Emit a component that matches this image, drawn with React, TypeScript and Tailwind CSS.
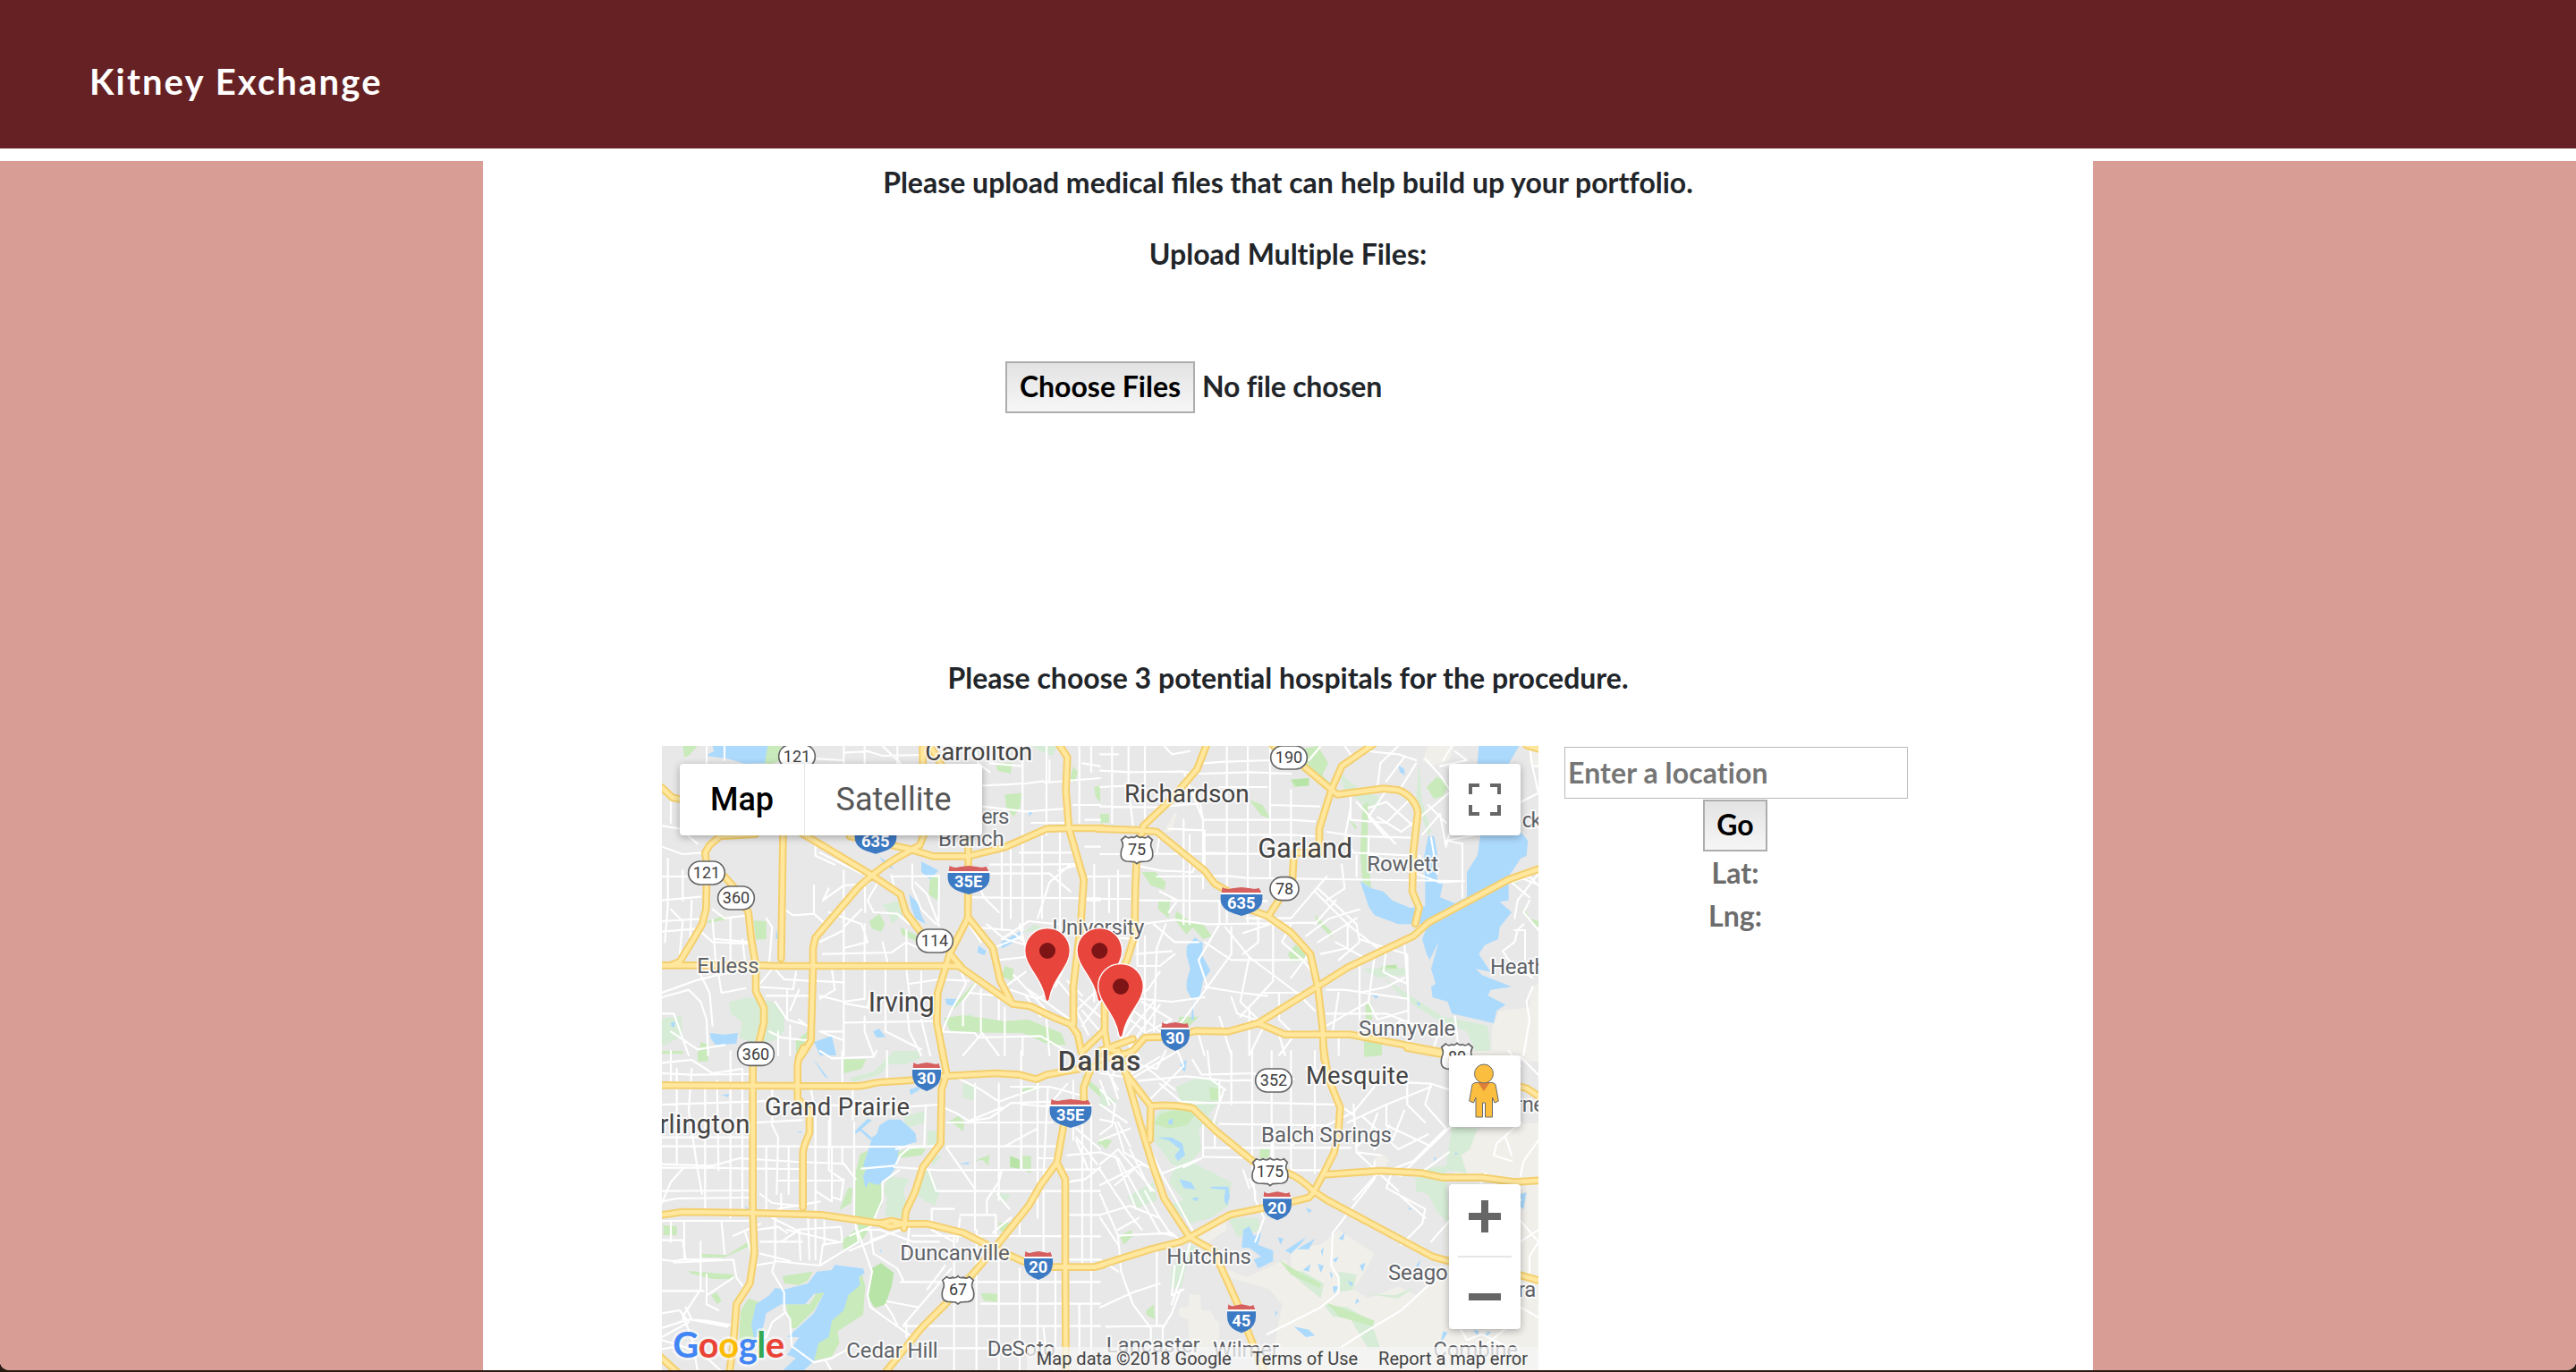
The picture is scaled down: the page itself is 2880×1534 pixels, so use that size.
import React from "react";

type Label = [text: string, x: number, y: number, width: number, size: number, tone?: "city" | "town" | "core"];
type Shield = [kind: "interstate" | "state" | "us", text: string, x: number, y: number];

interface Tile {
  at: string;
  land: string;
  haze: string;
  park: string;
  wood: string;
  water: string;
  streets: string;
  roads: string;
  labels: Label[];
  shields: Shield[];
}

/* The map is drawn as four tiles, each with its own origin. */
const tiles: Tile[] = [
  {
    at: "translate(-30 -42)",
    land: "",
    haze:
      "M1270 42L1355 42 1340 75 1300 60ZM770 575L830 560 835 610 800 640 790 600ZM255 900L330 885 400 900 440 940 440 1000 410 1030 340 1040 290 1020 300 970 260 940ZM30 955L95 948 100 1015 30 1050ZM1020 950L1080 940 1020 990ZM1280 640L1310 655 1240 670Z",
    park:
      "M100 42L150 42 120 75 105 80ZM365 42L430 42 430 90 400 102 360 100ZM1150 100L1205 98 1200 135 1155 125ZM1180 205L1235 200 1232 245 1210 280 1185 250ZM1410 110L1425 130 1415 165 1400 150ZM1480 180L1500 175 1500 230 1485 215ZM930 478L962 478 955 560 925 540ZM725 630L760 605 778 640 765 665 735 655ZM180 630L240 612 245 625 185 636ZM338 628L380 630 380 690 345 692ZM830 650L890 680 900 705 835 675ZM1180 780L1210 790 1205 830 1170 815ZM975 955L1040 945 1180 965 1260 960 1370 1005 1385 1045 1330 1045 1240 1005 1000 1003ZM1000 920L1085 830 1070 860 1010 925ZM480 1030L520 1000 505 1060 480 1080ZM160 1035L190 1045 180 1080 155 1080Z",
    wood: "",
    water:
      "M200 42L385 42 375 100 310 102 250 85 175 75 205 60ZM900 430L958 460 930 490 900 465ZM760 415L785 430 810 455 780 445ZM860 540L890 570 900 610 915 640 880 620 865 580ZM1168 700L1240 660 1210 700 1170 722ZM1092 712L1118 730 1112 745 1088 735ZM190 1005L240 1010 285 1005 280 1040 210 1045 195 1025ZM738 1000L758 990 780 1018 750 1020ZM540 1035L600 1015 615 1080 560 1080ZM414 655L420 690 412 690ZM980 890L1020 890 1015 915 985 910ZM60 970L75 968 72 985 62 984ZM1260 265L1275 262 1262 280Z",
    streets:
      "M180 42V100M240 42V90M640 42V102M710 42V102M770 42L830 100M820 42V102M550 85L640 90 640 65 720 60 770 75 900 72M1080 42L1090 100 1130 130M1240 42V560M1320 42V340M1315 165L1500 150M1105 175L1250 168 1310 160M1430 42V300M1470 42V130M1105 245L1250 262 1390 252M1130 100L1240 110M1410 240L1500 240M1170 350V660M1200 370V620M1240 400V660M1305 345V620M1365 330V700M1130 440L1240 440 1430 438M1060 470H1330L1400 530M1060 550L1500 553M1230 400H1420M1400 440L1330 500 1290 620M30 310L90 320 150 370M30 380L100 405 170 400M60 230V300M30 480H120M30 560L160 548M50 420V580L40 700M100 460V560M30 630L160 622M30 665L150 655 200 700 320 705M60 590L100 630 90 740M130 560L125 690M200 590L240 620 320 610M200 625L210 760M260 620V770M300 690L310 775M210 690L330 700M380 620L400 650 390 770M440 590L470 610 540 605 580 640M540 510V600M590 520L570 560 640 510 720 505 740 475M560 400L700 470M545 360V410L610 440M640 460V780M710 475L712 600M760 490L720 560 740 600 820 605 860 640M800 475L810 520M870 440L870 520 900 590 950 640M880 500L920 540 960 645M960 480L958 630M800 480L960 478M590 600L700 640 720 700 640 720M640 660L560 700M570 740L800 735 850 700 890 720M710 640V780M770 700L790 780M850 660L850 780M640 790V1080M710 790V890L640 900 560 880M600 790L610 860 560 890M780 790V1000M850 790L860 880M860 840L960 825 1060 830M900 800V920M540 830L640 835M640 970L950 965M560 1000L640 1030M640 905L720 920 730 870M1030 790L1050 840 1000 930 970 1000M1090 830L1040 900 1040 980M1100 860V1000L1160 1080M1160 890V960M1180 920V1080M960 1000L1080 1005 1090 1020 1300 1015 1410 1080M1060 870L1160 880M1140 720L1240 680M1060 640L1100 700M1120 640L1180 690 1290 720M1070 650L1200 660 1245 700M1230 640L1250 720M1160 760L1250 750M1180 850L1250 800M1210 810L1320 930M1350 820L1400 880 1410 940M1390 830L1440 880M1430 890L1500 950M1440 930L1500 1000M1250 880L1300 950M1200 860L1290 890 1330 870M1260 860L1400 960M1480 870L1420 930 1460 1010M1500 900L1440 980M1445 560L1500 560M1450 480H1500M1430 640H1500M1310 740V850M1380 780L1350 850M30 870L140 830 220 810 340 790M150 790L190 870 200 980M220 810L230 870 310 855M400 780L440 825 520 830M400 790L350 850 470 858 480 800M380 880H530M410 900L450 960 520 980M450 860V960M490 860L460 930M30 885L120 860 160 900 180 960 185 1080M30 940H70L120 1080M60 1000L150 1060 240 1045M390 1000L430 1020 520 1030M420 1000L420 1080M460 980V1080M490 960L540 1000M640 1000H560M710 950V1000L740 1080M850 900L860 1000 900 1080M900 960L930 1080M780 1000L900 1060M1100 1010L1040 1080M1240 1020V1080M1320 960L1330 1080M700 590L640 650M1440 100L1500 110M1450 290L1500 290M1330 90V160M1270 300H1380M1450 380H1500M1170 690L1260 630 1360 640M1360 460L1430 440M1480 440V900M1080 480L1110 550 1160 600",
    roads:
      "M30 182L65 215 100 222M345 338L225 345 190 375 175 400 180 440V500L178 590 165 640 130 700 90 765 60 778M240 480L275 520 320 600 330 690 345 780V865L372 920V970L355 1040 338 1085M437 300L430 755M10 778H370L410 780H1025L1110 840 1205 907 1265 915 1350 955 1400 975 1425 1010 1437 1070M500 335L600 395 733 475 830 540 848 600 905 675M912 330L895 375 860 395C800 425 733 475 690 515L600 620 545 685 537 720V780L530 1030 495 1085M660 345L860 388 940 412H1058L1180 382 1320 320 1400 318H1510M1055 345L1058 412 1056 620 995 740 980 790 955 870 952 970 975 1090M1060 620L1140 720 1165 830 1205 907M1350 20L1365 42 1390 80 1385 190 1395 318 1445 490 1435 640 1410 850V975M905 42V110M930 42L970 110M995 738L1035 785M1437 1070L1510 1000",
    labels: [
      ["Carrollton", 913, 90, 360, 84, "city"],
      ["ers", 1102, 303, 93, 72],
      ["Branch", 957, 377, 221, 72],
      ["Euless", 148, 805, 208, 72],
      ["Irving", 722, 932, 222, 92, "city"],
      ["University", 1340, 676, 308, 72],
    ],
    shields: [
      ["state", "121", 483, 77],
      ["interstate", "635", 747, 356],
      ["interstate", "35E", 1059, 492],
      ["state", "121", 180, 468],
      ["state", "360", 279, 552],
      ["state", "114", 945, 696],
    ],
  },
  {
    at: "translate(1470 -42)",
    land:
      "M1100 42L1190 42 1170 90 1110 110 1080 90ZM1440 55L1500 42 1500 110 1440 105ZM1340 930L1440 920 1445 850 1500 830 1500 1100 1310 1100 1315 985ZM215 330L250 265 258 270 240 330Z",
    haze:
      "M800 130L860 180 940 215 935 250 880 235 820 190ZM1070 100L1080 230 1110 330 1100 345 1060 210ZM880 790L1020 785 1025 810 930 820ZM950 820L1040 880 1150 950 1300 980 1310 1060 1260 1070 1230 1000 1130 960 1020 890ZM1380 480L1420 460 1390 520Z",
    park:
      "M640 60L730 42 765 100 745 140 775 170 760 190 700 130 650 100ZM0 210V270H30V300H0ZM500 222L545 240 570 285 540 275ZM640 155L700 150 700 175 650 180ZM1095 180L1130 145 1170 170 1150 210 1120 220ZM880 240L900 230 895 400 910 520 880 500 872 400ZM140 465L185 465 220 500 215 525 170 510ZM195 560L235 555 230 620 195 590ZM255 595L300 630 345 640 375 680 345 690 310 650 290 675 250 625ZM630 740L655 708 690 740 680 765 640 765ZM720 608L780 670 775 685 725 630ZM890 905H912V960H890ZM945 780L995 775 995 790 940 792ZM885 1010L945 1020V1080H885ZM265 950L330 950 300 980 260 985ZM835 290L860 310 858 325ZM1420 580L1440 620 1470 630 1470 650 1430 620Z",
    wood: "M640 155L700 150 700 175 660 178ZM945 780L995 778 990 788Z",
    water:
      "M1270 42L1405 42 1370 102 1265 102ZM1275 342L1410 330 1435 360 1430 410 1410 420 1370 480 1370 560 1340 565 1380 600 1340 650 1335 690 1290 710 1270 740 1310 800 1260 790 1280 810 1380 850 1310 860 1300 880 1360 910 1330 930 1320 972 1180 940 1165 900 1115 885 1110 850 1125 840 1110 790 1135 700 1105 760 1095 740 1080 690 1100 640 1000 640 920 610 900 580 872 495 910 520 950 530 980 560 1040 585 1090 580 1090 500 1085 420 1100 345 1120 345 1130 400 1130 490 1150 500 1140 550 1190 570 1230 550 1230 465 1265 410ZM290 715L318 685 345 705 342 745 370 795 345 830 335 880 310 895 290 860 290 830 302 790 290 745ZM1000 105L1020 120 1022 140 1005 130ZM910 875L935 880 925 890ZM310 900L315 960 305 960ZM1060 900L1075 905 1068 915Z",
    streets:
      "M0 125L100 130 280 128M0 180L100 175M40 42V300M95 42V180L110 310M150 42V290M215 42L240 70 300 60M0 245L180 248 330 235M330 200L345 290 640 290 720 295M270 128L340 135 500 130 640 135M425 42V640M350 340H640L720 345M345 100L420 95 570 90M495 42V640M570 42V480M640 190V400M350 400L540 405M0 405L270 404 550 404M0 480L100 478M190 480L430 478 490 485 1200 495M280 128L345 290 345 520M280 290V640M400 180H560M570 240L735 245M0 555H110M130 560L400 562M0 640L100 640M130 640L250 625 360 640 720 635M200 340L190 400M230 320L350 325 350 440M300 340V640M60 460V640M30 490V600M400 562V640L330 760 360 850M440 562L560 562M490 620L640 620 760 480M420 650L500 750 660 870M580 640V830L470 950M350 700L440 760 720 760M440 650V740L360 850 280 960M500 750L470 900 530 960M640 640L610 700 680 760 740 840M720 530L830 640 830 720 740 740M730 520L860 640 870 700 800 760M760 560L820 520 810 440M720 640L790 560M690 680L770 620 870 590M730 700L860 620M790 700L900 760M830 640L930 720M640 820L700 740M550 870H720M560 960L500 1080M350 850L470 870 560 880M350 885L240 900 130 890M440 885L460 940 520 960M600 870V960L640 1000M660 870L720 930M760 860L820 860 1030 890M800 870L780 1000M870 770V960M920 750L900 900 930 960 1030 930M960 720L950 800 1030 840M870 690L960 720 1030 740 1035 1000M1020 700L1035 900M870 870L960 850 1020 820M760 940H960L1110 1000M760 980L900 900M820 42L840 70M900 60L1000 70 1060 90M740 42L700 90M1000 42L940 100 930 180M1020 80L960 160M1090 85L1140 140 1180 200M1060 100L1010 180M840 190V290L960 300 1040 220M860 230L990 370M900 250L960 230 1050 310M960 190L900 280 960 350M930 280L1010 330 1050 300M760 330L860 345 1040 350M840 250L820 350 850 400 1050 410M900 345V400L1050 470M860 410V480M1060 470L1140 500 1220 495M1070 410L1100 470M1140 270L1080 340M1140 270L1160 380 1170 340M1110 350L1130 470M1215 550V370L1160 360 1260 340M1190 60L1230 90 1140 110M1180 42L1150 90M1050 300L1170 200M1100 240L1160 300M1440 42L1450 110 1470 200 1410 230M1450 110H1500M1500 540L1440 480 1380 500 1440 550M1400 480L1500 520M1420 640L1400 660 1390 700 1350 730 1370 760 1450 820M1390 660H1425V760M1390 620L1400 560 1470 470M1450 850L1430 900 1440 960 1420 1080M1440 560L1420 600 1470 660M150 680V1000M190 720L180 1000M220 640L190 720M0 680L110 690M125 690V780L200 780 250 740M120 740L240 730M120 790V860M200 800L160 860 90 900M140 900L240 960 160 1000M100 920L200 1000M90 950L170 1020M60 1010L130 1080M0 870V900M130 890L60 1050M180 900L60 1050M200 910L100 1050M280 960L240 1000M330 1010L350 1080M400 950L440 1080M500 920V1080M600 1010L620 1080M660 1000L600 1080M800 1020V1080M950 970L870 1000M1010 960L970 1000M1150 960L1120 1050M1190 950L1200 1040M480 670L570 640M530 600V700L480 740M0 70H60M200 530L260 560 230 600M180 640L250 700 330 700M110 440L200 460 310 465 320 440",
    roads:
      "M360 30L325 120 240 220 145 310 138 340M-10 320L140 325 190 330 350 460 385 505 430 530 500 590 560 612 640 668 705 740 730 850 745 980 752 1095M122 430L118 520 115 680 90 760 60 830M570 30L600 60M670 100L795 205 950 185 1000 190C1040 205 1065 240 1065 270L1050 400 1047 530 1070 585 1057 638M925 30L810 110 775 190 735 320V400H650L645 490M605 550L565 612M1490 448L1370 490 1100 635 1050 680 830 785 735 845 530 972 430 1000 320 998 240 1018 150 1020 110 1065 40 1090M530 972L620 1010H840L1160 1072M15 910V1000L25 1055 60 1070M1430 40L1480 55",
    labels: [
      ["Richardson", 81, 231, 419, 84, "city"],
      ["Garland", 529, 418, 317, 92, "city"],
      ["Rowlett", 895, 463, 239, 72],
      ["ck", 1415, 315, 66, 72],
      ["Heath", 1308, 808, 188, 72],
      ["Sunnyvale", 867, 1014, 325, 72],
    ],
    shields: [
      ["state", "190", 633, 81],
      ["us", "75", 123, 389],
      ["interstate", "635", 474, 564],
      ["state", "78", 618, 521],
      ["interstate", "30", 252, 1017],
      ["us", "80", 1197, 1085],
    ],
  },
  {
    at: "translate(-30 1023)",
    land: "",
    haze:
      "M810 0L890 0 895 25 850 45 790 45 760 80 670 105 660 90 740 70 780 30ZM1040 110L1080 110 1080 165 1040 160ZM840 220L915 200 910 240 850 260ZM790 420L860 430 840 470 850 510 830 560 780 555 785 490 770 470ZM905 400L930 400 960 480 945 520 890 490ZM1145 478L1200 480 1180 512ZM920 270L960 265 955 310 920 320ZM930 360L970 350 940 385Z",
    park:
      "M640 28L715 28 700 60 640 75ZM150 0H185V35H150ZM30 0H100V10H30ZM695 345L720 335 710 395 765 440 768 520 745 560 705 630 640 672 635 635 690 590 678 560 680 405ZM655 460L670 460 665 510 625 535ZM820 340L880 320 915 330 900 350 820 360ZM985 240L1025 218 1045 240 1040 270 1010 245ZM1070 372L1130 348 1125 385 1105 365ZM1198 352L1230 365 1230 395 1198 390ZM1240 352H1268V410L1240 400ZM1160 575L1200 578 1180 610 1160 600ZM1235 130L1285 115 1290 130 1235 140ZM1440 80L1500 130 1500 155 1440 100ZM35 585L80 588V618H35ZM160 680L250 685 320 640 325 655 240 692 165 692ZM115 738L200 745 270 750 275 765 200 765 130 748ZM195 820L215 810 230 840 215 848ZM435 755L535 740 520 770 490 785 440 780ZM320 830L365 845 335 900 345 940 290 935 295 870ZM700 745L712 790 705 885 620 940 625 980 600 1025 535 1040 560 960 595 890 650 820 680 790ZM445 850L525 850 550 810 575 810 540 870 480 930 465 930ZM290 935L350 940 330 975 290 970ZM1100 812L1155 815V842L1110 838ZM765 712L808 745 800 790 780 850 745 862 722 830 735 730ZM1490 310L1500 300V320Z",
    wood: "M765 712L808 745 800 790 780 850 745 862 722 830 735 730ZM1198 352L1230 365 1230 395 1198 390Z",
    water:
      "M760 250L790 230H830L880 275 885 305 850 315 825 330 815 390 790 425 755 450 725 440 712 460 705 420 715 395 705 385 725 325 735 290 750 280ZM676 270L720 228 735 232 700 262 735 292 730 300 695 268 680 278ZM610 718L705 730 710 745 690 760 695 785 655 820 640 870 600 905 590 960 555 980 540 1040 500 1077H430L480 1030 450 1020 490 960 450 960 485 930 540 880 575 810 540 815 510 850 430 850 380 880 370 925 340 970 330 920 345 850 390 820 410 795 440 800 520 780 550 740 600 735ZM860 130L890 120 895 130 865 148ZM535 25L560 55 590 95 575 85ZM480 272L500 270 498 275ZM1025 380L1060 372 1058 380ZM310 520L325 535 315 540ZM765 665L768 675 760 672ZM230 148L255 145 252 155Z",
    streets:
      "M30 40L130 30 200 75 300 60M60 0V110M80 60V380M130 60L120 200 150 400 165 480M175 110V540M215 100L220 400M260 0V560M300 60V540M30 180L180 175 335 170M30 75L130 80 330 78M30 290H335M30 320L480 320 570 322 965 320M30 380L200 385 290 360 480 372 640 378 680 430M30 392H200L330 395 500 396M100 395L60 440 30 510M30 470L330 468M30 505L80 495 335 492M350 240L500 232M350 170L420 165M400 120V250L420 290 415 480M380 320V540M420 435H640M360 480L400 510 490 520M430 480V540M455 320V480M545 180V540M545 470L600 505 600 320M590 235V400L640 435M635 320V380M530 130L540 180 820 190 960 180M670 130V230M675 240V570L735 740M595 190V320M560 0L600 25 740 20 750 0M785 0V100M635 0V105M815 330L850 320 910 320 915 180M700 395L810 385M815 380L830 350 860 325 960 318M810 390L960 400 1500 398M825 400L770 440 770 500 730 590 660 620M980 70L1100 130 1160 170 1300 120M965 185L1020 210 1060 235 1130 225 1200 175 1330 170M985 325L1085 470M1080 110V600M1060 235L1170 190M1160 110V500M1235 0V400M1290 100V560M1325 120L1310 420M1200 120H1330L1440 150M985 240H1340M1180 320L1290 260M985 320H1370M1290 360H1360M925 400L950 470H1500M1120 550V500L1160 440 1170 400M1155 480L1195 530M935 530H1010M935 530V600L1010 640M1030 550H1150V620M870 620L1500 622M1390 550H1500M1390 700L1500 700M1010 620V1075M1085 600V1075M1160 700V1075M1230 730V1075M1290 770V1075M1350 720V1075M1230 550V620M1310 470V740M830 775H1500M1100 848H1500M840 923H1500M850 997H1380M700 600L760 600 820 620 870 640 960 640M730 600L740 680 820 730 840 770M730 635L860 590 850 700M660 670L780 620M680 590L690 640 560 720 410 705M735 740L720 820 730 860 870 960M785 840L890 860M840 920L960 780 1000 730M920 800L980 720M850 910V960M780 850L800 880 820 920M30 570H340M350 600L420 590 450 610M400 560L480 600 630 590 635 640 570 650 560 720M430 640L490 600 495 700M450 600L620 640M410 540V700L400 740 440 810V870L460 900 465 990 540 1045 600 1030 680 985M440 880L400 910 380 960 350 970M520 560L525 700M545 560V700M575 570V650M420 530L560 505M360 640H500M360 680L460 705M30 635H100L110 700 230 700M60 570V640M105 570V700M160 640V800L100 890 130 960 150 1075M230 570L240 680M30 700L70 705 100 700M70 710L270 700 280 760 310 800M180 750V850L220 870M30 805H170M180 820L270 760M30 880L90 870 120 910 30 960M100 900L180 905 260 920 280 900M130 900L110 860M30 930L120 900 250 925M30 970L160 1010 230 1075M30 1000L90 990M1410 100V300M1440 200V720M1470 180V1075M1390 350L1500 340M1390 440L1450 430 1500 390M1420 300L1460 400M1430 850V1075M1310 930L1320 1020M580 1040L600 1075M340 720L400 710M270 620L360 580M310 610L330 680M600 490L630 500 640 430M1030 560L1020 640M1140 610L1200 560M1390 110L1330 180M1240 180L1370 190M1420 260L1500 330M1420 290L1490 380",
    roads:
      "M10 115L680 118C720 118 740 105 765 105L870 98M965 85L1150 75 1230 80 1285 95 1320 80 1430 60 1500 50M338 30L335 60V540L340 680 325 780 280 850 270 980 255 1090M505 -10L490 20 485 50V160L525 200V275C515 300 503 320 503 345V525M968 -10L985 75 968 130 965 310 905 390 880 470C865 505 850 530 848 540L842 595M10 553L100 540 330 543 565 550 760 578 800 570 842 580H920L1040 610 1120 650 1160 670 1240 705 1300 725H1480L1510 718M760 578L795 590 842 580M1378 245L1355 375 1300 450 1260 520 1155 650 1080 740 980 850 900 930 770 1090M1355 375L1383 430V700L1385 1090M1445 170V120L1465 70M20 1022L90 1085",
    labels: [
      ["Grand Prairie", 375, 217, 486, 82, "city"],
      ["Arlington", -36, 275, 361, 88, "city"],
      ["Duncanville", 829, 703, 367, 72],
      ["Cedar Hill", 649, 1029, 307, 72],
      ["DeSoto", 1121, 1024, 229, 72],
      ["Dallas", 1358, 66, 278, 94, "core"],
    ],
    shields: [
      ["state", "360", 345, 10],
      ["interstate", "30", 918, 87],
      ["interstate", "35E", 1401, 210],
      ["interstate", "20", 1293, 720],
      ["us", "67", 1023, 801],
    ],
  },
  {
    at: "translate(1470 1023)",
    land:
      "M1200 330L1290 250 1500 240 1500 1100 550 1100 590 960 610 850 560 790 600 740 640 730 640 660 740 650 800 600 920 680 900 720 850 800 900 830 1000 790 1060 820 1160 720 1160 580 1180 450ZM300 815L335 820 340 870 370 870 385 900 400 910 400 1000 300 1000 295 900 265 890 265 860 295 860ZM920 360L950 345 970 370 950 395 925 385ZM300 620L420 570 425 600 350 650ZM400 720L490 760 620 700 640 740 570 800 430 760ZM1200 0H1420L1410 20 1250 30Z",
    haze:
      "M255 120L330 88 400 105 405 160 360 220 400 245 330 260 340 330 290 390 240 380 180 300 150 260 200 200 270 180ZM250 390L300 370 400 420 440 440 430 520 370 560 300 580 260 540 220 520 280 500 230 440ZM430 560L530 560 540 600 460 625ZM1180 255L1265 260 1240 330 1210 350 1230 410 1160 400 1170 580 1130 540 1100 480 1060 470 1055 400 1160 385ZM750 850L830 860 880 890 920 940 940 1000 900 1000 840 900 780 890ZM620 730L680 740 750 780 740 830 690 790ZM890 815L990 820 1060 790 1000 830ZM300 650L330 660 290 720 270 800 235 790 240 730ZM0 130L60 170 0 190ZM90 490L180 440 190 500 120 530ZM800 740L860 750 850 800 800 810Z",
    park:
      "M365 120L405 130 400 165 370 165ZM205 210L310 185 330 200 290 250 230 260 180 245ZM885 0H945V15L890 20ZM535 330H570L565 360 535 360ZM65 620L105 600 110 620 90 640 80 650ZM155 870L180 850 183 900 155 885ZM0 290L40 300 20 330 0 310ZM600 700L670 745 740 780 735 795 640 750ZM760 845L830 870 920 905 915 925 800 890Z",
    wood: "",
    water:
      "M270 42L290 30 285 70 272 60ZM230 230L245 228 242 248 228 245ZM480 600L500 588 515 620 540 610 530 650 580 670 580 705 530 730 515 700 540 690 500 660 475 660ZM190 290L240 290 275 310 285 350 260 370 250 350 268 330 230 300ZM265 430L305 440 320 465 280 460ZM370 455L430 455 435 490 425 520 415 500 420 465 375 462ZM305 495L330 490 325 505ZM595 625L615 630 605 650ZM620 670L690 625 670 650 640 680ZM660 665L720 630 700 665ZM680 735L705 715 700 740ZM690 525L710 535 700 545ZM800 630L820 610 815 635ZM740 670L750 660 745 690ZM730 715L750 720 740 745ZM780 700L800 690 790 710ZM870 720L890 710 880 740ZM770 740L780 750 775 765ZM780 790L800 790 785 815ZM830 770L850 780 840 790ZM650 925L700 935 720 955 690 960ZM1410 480L1430 475 1420 530 1410 525ZM1120 355L1128 360 1122 372ZM1030 525L1045 528 1040 535ZM1190 340L1200 345 1192 350ZM1150 940L1165 945 1140 985ZM1250 935L1270 940 1265 955ZM1300 940L1310 945 1290 960ZM590 870L595 880 585 890ZM1060 720L1075 700 1065 735ZM860 830L870 840 855 850Z",
    streets:
      "M0 75L100 90M100 80L200 20M110 90L260 0M130 100L290 85 420 100 510 98M170 160L280 50 260 0M200 110L270 170 380 175M0 30L60 130M310 30L340 80 510 75 650 95M360 0L370 95 420 130M440 0V180M510 0V390L520 500M575 0V400M640 0V400M720 0V410M690 60L900 100 1110 110 1170 130M310 175L500 172 720 178 800 180 850 215M400 245L760 250 850 205M345 325H840M415 130L380 240M385 245V325M345 250V355L500 358M280 390L340 360M640 400H740M580 250V400M640 320L720 250M850 205L920 120M850 180L860 340 1000 470M860 340L940 350M830 240L960 180 1110 120M1110 110L1090 180 1160 260 1050 370 920 420M880 220L1000 330 1100 280M960 180V250L1110 320M930 210L900 290 860 320M1030 110V180L1090 240M1020 200L980 300M970 250L920 330M1030 395L1180 250M980 400L960 460 1090 530 1080 580 1010 650M1010 420L940 400 850 500M920 370L920 430 780 610 775 720 800 760 800 810 740 860 560 950M1000 480L1090 560M1170 340L1060 420M1410 20L1500 110M1370 0L1410 50M1410 240L1330 310 1320 350 1380 370M1360 290L1380 350M1290 410L1340 460 1410 500M1470 300L1420 370 1410 420M1280 440L1180 560 1110 640M1410 570L1470 640 1440 690V755M1410 640L1470 600M1140 750L1010 870 960 900 860 960 800 1000M1190 900L1230 970 1280 950 1380 1000M1410 860L1480 900M1300 980L1400 900M60 0L40 100 60 160M0 130L50 180 40 250 0 280M0 230L50 240 80 340 180 400M60 240L100 320M0 180L90 240M0 340L60 360 200 610 250 620M0 380L60 330 180 470M0 300L100 260M0 450L140 380 210 410 340 360M0 400L100 550 140 600M50 350L120 530M100 330L170 470M0 550L100 520 200 560M0 480L60 620 70 740 110 850 170 930M0 560L60 650M60 620L240 610 270 640M140 270L210 420 320 620 340 660M220 0L190 60M500 430L520 470 520 500 550 560 520 640M150 470L200 560 240 620M190 660V920M250 720L240 820 280 800M20 925L210 922V990M0 860L110 810 200 780M270 800L240 880 210 930M170 930V1000M110 400L50 450M190 60L0 20M250 130L160 60M300 650L270 760 240 850M0 700L60 740M130 560L60 600M0 100L30 180M480 400L500 460M400 100V170",
    roads:
      "M85 70L130 230 175 380 215 495 300 625 380 670 430 780 470 870 495 940 555 1090M85 75L170 185C220 180 260 182 310 192L390 270 515 372M625 408C660 420 690 445 715 470L760 500 1115 690 1180 708M1400 750L1490 775M170 185L167 298M748 -15L765 90 805 190 800 260 785 340 750 410 715 475 700 492 635 508M555 525L435 550 300 625 270 640 170 665 -10 722M750 415L940 402 1080 410 1150 425H1280L1390 440 1490 433M1030 -10L1150 12M1400 118L1430 125 1490 165M-10 30L80 10M60 0L85 70M0 0L110 -40",
    labels: [
      ["Mesquite", 690, 110, 344, 82, "city"],
      ["Balch Springs", 540, 305, 438, 72],
      ["Hutchins", 223, 715, 284, 72],
      ["Seago", 966, 767, 200, 72],
      ["Lancaster", 20, 1010, 315, 72],
      ["Wilmer", 378, 1027, 222, 72],
      ["Combine", 1117, 1027, 284, 72],
      ["rne", 1393, 203, 98, 72],
      ["ra", 1402, 825, 60, 72],
    ],
    shields: [
      ["state", "352", 582, 99],
      ["us", "175", 570, 404],
      ["interstate", "20", 594, 520],
      ["interstate", "45", 474, 898],
    ],
  },
];

function RoadShield({ shield }: { shield: Shield }) {
  const [kind, text, x, y] = shield;
  const wide = text.length > 2;
  if (kind === "interstate") {
    return (
      <g transform={`translate(${x} ${y})`}>
        <g transform={wide ? "scale(1.46 1)" : undefined}>
          <path d="M-44 -48L-38 -44Q-28 -40 -22 -44L0 -48 22 -44Q30 -40 40 -46L46 -30H-46Z" fill="#d6605f" />
          <path d="M-48 -30H48V-22H-48Z" fill="#fff" />
          <path d="M-48 -24H48V-8Q48 26 18 40L0 48 -18 40Q-48 26 -48 -8Z" fill="#3d7ac4" />
        </g>
        <text x="-1" y="25" textAnchor="middle" fontSize="55" fontWeight="700" fill="#fff" className="font-[Roboto]">
          {text}
        </text>
      </g>
    );
  }
  const w = wide ? 61 : 48;
  return (
    <g transform={`translate(${x} ${y})`}>
      {kind === "state" ? (
        <rect x={-w} y={-39} width={w * 2} height={78} rx={39} fill="#fff" stroke="#666" strokeWidth="5" />
      ) : (
        <path
          d={
            wide
              ? "M-46 -42Q-34 -34 -24 -42Q-12 -34 0 -44Q12 -34 24 -42Q34 -34 46 -42L58 -30Q48 -15 58 0Q66 36 40 40L8 42 0 48 -8 42 -40 40Q-66 36 -58 0Q-48 -15 -58 -30Z"
              : "M-38 -44Q-28 -34 -18 -42Q-8 -36 0 -46Q8 -36 18 -42Q28 -34 38 -44L52 -32Q42 -15 51 0Q60 36 34 40L8 42 0 48 -8 42 -34 40Q-60 36 -51 0Q-42 -15 -52 -32Z"
          }
          fill="#fff"
          stroke="#666"
          strokeWidth="5"
        />
      )}
      <text x="0" y="19" textAnchor="middle" fontSize="54" fontWeight="400" fill="#3c3c3c" className="font-[Roboto]">
        {text}
      </text>
    </g>
  );
}

function Pin({ x, y }: { x: number; y: number }) {
  return (
    <g transform={`translate(${x} ${y})`}>
      <path
        d="M0 -247C-43 -247 -76 -214 -76 -171C-76 -118 -18 -80 -6 -6Q0 4 6 -6C18 -80 76 -118 76 -171C76 -214 43 -247 0 -247Z"
        fill="#e8453c"
        stroke="#fff"
        strokeWidth="4"
      />
      <circle cy="-171" r="27" fill="#7d1416" />
    </g>
  );
}

const logo: [string, string][] = [
  ["G", "#4285f4"],
  ["o", "#ea4335"],
  ["o", "#fbbc05"],
  ["g", "#4285f4"],
  ["l", "#34a853"],
  ["e", "#ea4335"],
];

function MapCanvas() {
  return (
    <svg viewBox="0 0 2940 2094" className="block h-[698px] w-[980px]">
      <rect width="2940" height="2094" fill="#e8e8e8" />
      {tiles.map((t) => (
        <g key={t.at} transform={t.at}>
          <path d={t.land} fill="#f0efea" />
          <path d={t.haze} fill="#d6ecd6" />
          <path d={t.park} fill="#c9eabb" />
          <path d={t.wood} fill="#b8e4a8" />
          <path d={t.water} fill="#acdafd" />
        </g>
      ))}
      <g fill="none" stroke="#fff" strokeWidth="6.5" strokeLinejoin="round" strokeLinecap="round">
        {tiles.map((t) => (
          <path key={t.at} transform={t.at} d={t.streets} />
        ))}
      </g>
      <g fill="none" stroke="#f4cf6e" strokeWidth="26" strokeLinejoin="round" strokeLinecap="round">
        {tiles.map((t) => (
          <path key={t.at} transform={t.at} d={t.roads} />
        ))}
      </g>
      <g fill="none" stroke="#ffe79e" strokeWidth="14" strokeLinejoin="round" strokeLinecap="round">
        {tiles.map((t) => (
          <path key={t.at} transform={t.at} d={t.roads} />
        ))}
      </g>
      {tiles.map((t) => (
        <g key={t.at} transform={t.at}>
          {t.labels.map(([text, x, y, width, size, tone]) => (
            <text
              key={text}
              x={x}
              y={y}
              textLength={width}
              fontSize={size}
              fontWeight={tone === "core" ? 500 : 400}
              fill={tone ? "#444" : "#5f6368"}
              stroke="#fff"
              strokeOpacity="0.75"
              strokeWidth="12"
              strokeLinejoin="round"
              paintOrder="stroke"
              className="font-[Roboto]"
            >
              {text}
            </text>
          ))}
          {t.shields.map((s) => (
            <RoadShield key={s.join()} shield={s} />
          ))}
        </g>
      ))}
      <Pin x={1293} y={858} />
      <Pin x={1468} y={858} />
      <Pin x={1539} y={978} />
      <text
        x="37"
        y="2053"
        textLength="374"
        fontSize="120"
        fontWeight="700"
        stroke="#fff"
        strokeOpacity="0.5"
        strokeWidth="18"
        strokeLinejoin="round"
        paintOrder="stroke"
        className="font-[Lato]"
      >
        {logo.map(([letter, color], i) => (
          <tspan key={i} fill={color}>
            {letter}
          </tspan>
        ))}
      </text>
    </svg>
  );
}

const control = "rounded-[4px] bg-white shadow-[0_2px_8px_rgba(0,0,0,0.3)]";

function HospitalMap() {
  return (
    <div className="relative h-[698px] w-[980px] shrink-0 overflow-hidden font-[Roboto,sans-serif] font-normal">
      <MapCanvas />
      <div className={`${control} absolute top-5 left-5 flex h-20 w-[338px] text-[36px]`}>
        <div className="flex w-[139px] items-center justify-center font-medium text-black">Map</div>
        <div className="flex flex-1 items-center justify-center border-l border-[#e6e6e6] font-normal text-[#565656]">
          Satellite
        </div>
      </div>
      <div className={`${control} absolute top-5 right-5 flex size-20 items-center justify-center`}>
        <svg viewBox="0 0 36 36" className="size-9" fill="none" stroke="#666" strokeWidth="4">
          <path d="M2 12V2H12M24 2H34V12M34 24V34H24M12 34H2V24" />
        </svg>
      </div>
      <div className={`${control} absolute top-[346px] right-5 flex size-20 items-center justify-center`}>
        <svg viewBox="0 0 34 62" className="mr-[2px] h-[62px] w-[34px]" stroke="#6b6b6b" strokeWidth="1">
          <path d="M7 21.5H27L30 23.5 33.3 42 29 44 26.5 38V60H18.500V44H15.500V60H8V38L5.500 44 .7 42 4 23.500Z" fill="#fbbe3f" />
          <path d="M10.500 21.500H23.500L17 31Z" fill="#de7f38" stroke="none" />
          <circle cx="17" cy="11.500" r="10.500" fill="#fbbe3f" />
        </svg>
      </div>
      <div className={`${control} absolute top-[490px] right-5 flex h-[162px] w-20 flex-col items-center`}>
        <div className="flex h-20 items-center">
          <svg viewBox="0 0 36 36" className="mt-[-8px] size-9" fill="#666">
            <path d="M14 0H22V14H36V22H22V36H14V22H0V14H14Z" />
          </svg>
        </div>
        <div className="h-[2px] w-[60px] bg-[#e6e6e6]" />
        <div className="flex h-20 items-center">
          <div className="mt-[8px] h-2 w-9 bg-[#666]" />
        </div>
      </div>
      <div className="absolute right-0 bottom-0 flex h-[26px] w-[572px] items-center justify-end gap-[23px] bg-[#f5f5f5]/75 pr-3 text-[20px] whitespace-nowrap text-[#444]">
        <span>Map data ©2018 Google</span>
        <span>Terms of Use</span>
        <span>Report a map error</span>
      </div>
    </div>
  );
}

/* Sets a word with its letters unjoined. */
function Plain({ children }: { children: string }) {
  return <span className="[font-variant-ligatures:none]">{children}</span>;
}

export default function App() {
  return (
    <div className="h-[1534px] w-[2880px] overflow-hidden bg-[#2b1a12] font-[Lato,sans-serif] text-[32px] leading-[48px] font-bold text-[#212529]">
      <div className="flex h-[1532px] flex-col overflow-hidden rounded-b-[10px] bg-white">
        <header className="mb-[14px] flex h-[166px] shrink-0 items-center bg-[#652123] px-[100px] pt-4">
          <h1 className="text-[40px] tracking-[2.15px] text-white">Kitney Exchange</h1>
        </header>
        <div className="flex flex-1">
          <aside className="w-[540px] bg-[#d89d95]" />
          <main className="flex w-[1800px] flex-col items-center">
            <p>
              Please upload medical files that can help build up your <Plain>portfolio.</Plain>
            </p>
            <p className="mt-8">
              Upload <Plain>Multiple</Plain> Files:
            </p>
            <div className="mt-24 flex w-[632px] items-center gap-2">
              <button className="h-[58px] w-[212px] border-2 border-[#adadad] bg-linear-to-b from-[#e3e3e3] to-[#f6f6f6] pb-[2px] leading-none text-black">
                Choose Files
              </button>
              <span className="pb-[2px] tracking-[-0.2px] [font-variant-ligatures:common-ligatures]">No file chosen</span>
            </div>
            <p className="mt-[272px]">
              Please choose 3 <Plain>potential</Plain> hospitals for the procedure.
            </p>
            <div className="mt-[52px] flex w-[1400px] gap-[29px]">
              <HospitalMap />
              <div className="flex w-[384px] flex-col items-center pt-px text-[#6c6c6c]">
                <input
                  placeholder="Enter a location"
                  className="h-[58px] w-full border border-[#b9b9b9] px-[3px] pb-[2px] [font-variant-ligatures:none] placeholder:tracking-[0.1px] placeholder:text-[#757575]"
                />
                <button className="mt-px mr-[2px] h-[58px] w-[72px] border-2 border-[#adadad] bg-linear-to-b from-[#e3e3e3] to-[#f6f6f6] pb-[2px] leading-none text-black">
                  Go
                </button>
                <p className="mr-[2px]">Lat:</p>
                <p className="mr-[2px]">Lng:</p>
              </div>
            </div>
          </main>
          <aside className="w-[540px] bg-[#d89d95]" />
        </div>
      </div>
    </div>
  );
}
